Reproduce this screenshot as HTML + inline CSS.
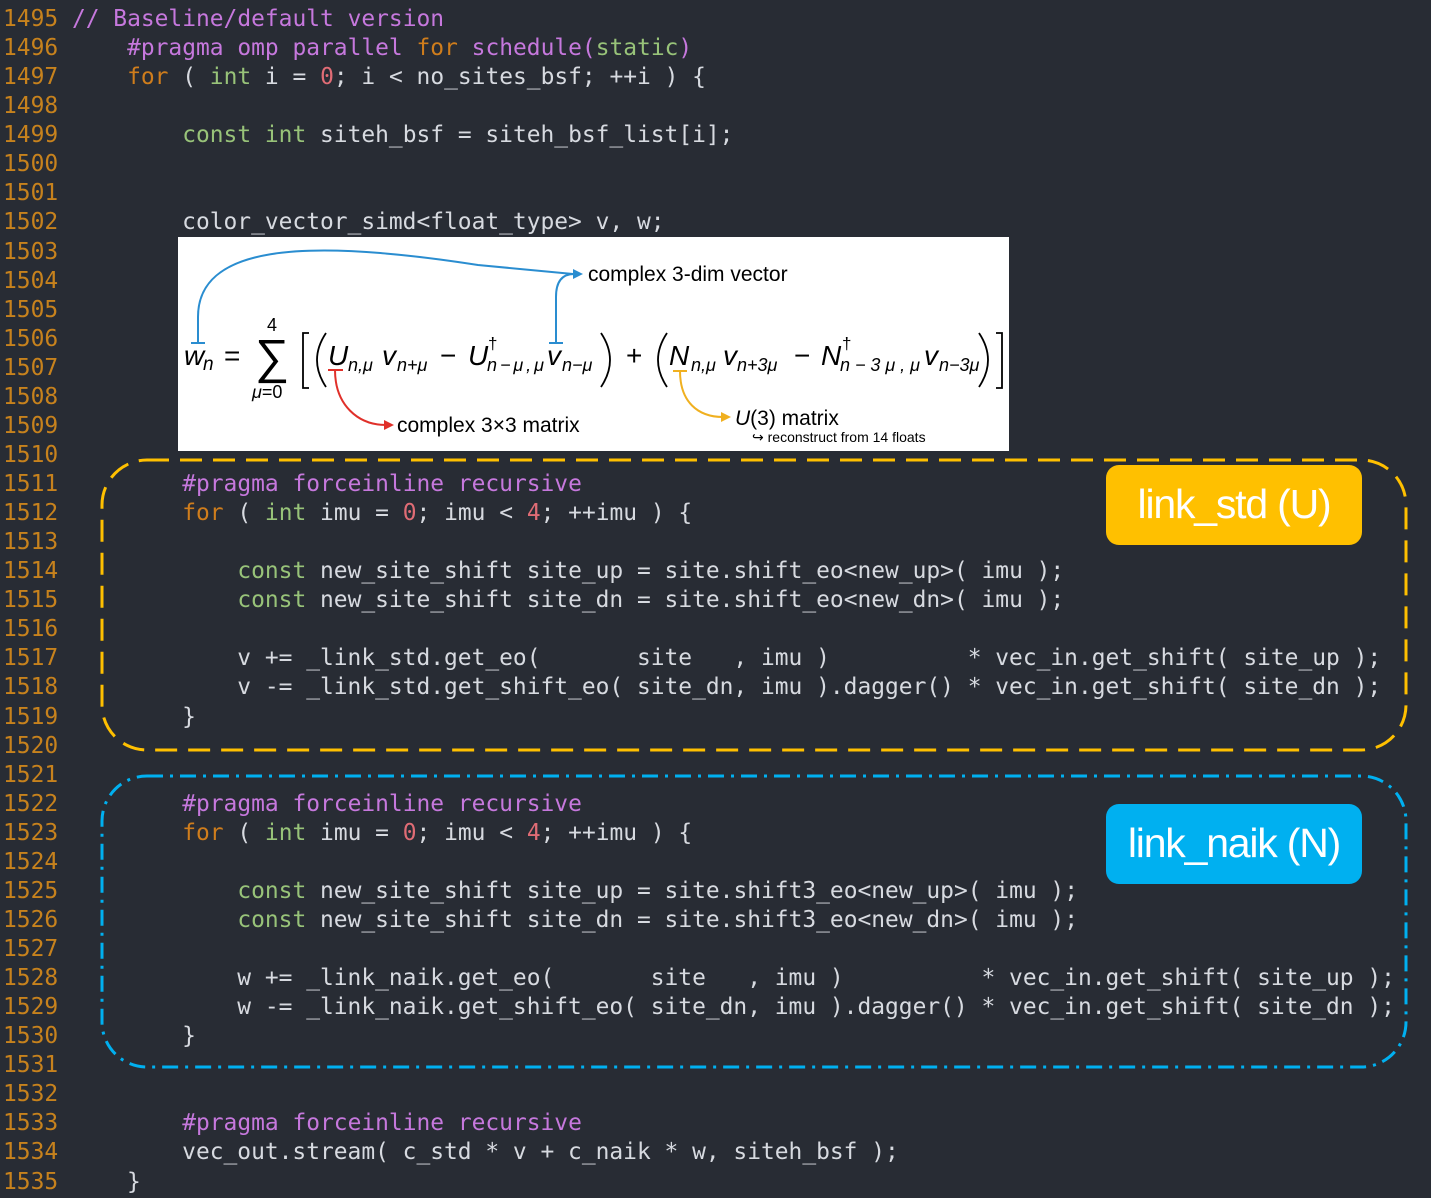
<!DOCTYPE html>
<html><head><meta charset="utf-8"><style>
html,body{margin:0;padding:0;background:#282c34;width:1431px;height:1198px;overflow:hidden;position:relative}
.code{position:absolute;left:3px;top:5px;font-family:"DejaVu Sans Mono","Liberation Mono",monospace;font-size:22.9px;line-height:29.07px;color:#d7dae0;white-space:pre;margin:0}
.n{color:#c7821d}.p{color:#c678dd}.k{color:#cf7d1c}.g{color:#98c379}.r{color:#e06c75}
.lab{position:absolute;left:1106px;width:256px;height:80px;border-radius:13px;color:#fff;font-family:"Liberation Sans",sans-serif;font-size:41px;line-height:78px;text-align:center;letter-spacing:-1.2px}
.math{position:absolute;left:178px;top:237px;width:831px;height:214px;background:#fff}
</style></head><body>
<pre class="code"><span class="n">1495</span> <span class="p">// Baseline/default version</span>
<span class="n">1496</span>     <span class="p">#pragma omp parallel</span> <span class="k">for</span> <span class="p">schedule(</span><span class="g">static</span><span class="p">)</span>
<span class="n">1497</span>     <span class="k">for</span> ( <span class="g">int</span> i = <span class="r">0</span>; i &lt; no_sites_bsf; ++i ) {
<span class="n">1498</span>
<span class="n">1499</span>         <span class="g">const int</span> siteh_bsf = siteh_bsf_list[i];
<span class="n">1500</span>
<span class="n">1501</span>
<span class="n">1502</span>         color_vector_simd&lt;float_type&gt; v, w;
<span class="n">1503</span>
<span class="n">1504</span>
<span class="n">1505</span>
<span class="n">1506</span>
<span class="n">1507</span>
<span class="n">1508</span>
<span class="n">1509</span>
<span class="n">1510</span>
<span class="n">1511</span>         <span class="p">#pragma forceinline recursive</span>
<span class="n">1512</span>         <span class="k">for</span> ( <span class="g">int</span> imu = <span class="r">0</span>; imu &lt; <span class="r">4</span>; ++imu ) {
<span class="n">1513</span>
<span class="n">1514</span>             <span class="g">const</span> new_site_shift site_up = site.shift_eo&lt;new_up&gt;( imu );
<span class="n">1515</span>             <span class="g">const</span> new_site_shift site_dn = site.shift_eo&lt;new_dn&gt;( imu );
<span class="n">1516</span>
<span class="n">1517</span>             v += _link_std.get_eo(       site   , imu )          * vec_in.get_shift( site_up );
<span class="n">1518</span>             v -= _link_std.get_shift_eo( site_dn, imu ).dagger() * vec_in.get_shift( site_dn );
<span class="n">1519</span>         }
<span class="n">1520</span>
<span class="n">1521</span>
<span class="n">1522</span>         <span class="p">#pragma forceinline recursive</span>
<span class="n">1523</span>         <span class="k">for</span> ( <span class="g">int</span> imu = <span class="r">0</span>; imu &lt; <span class="r">4</span>; ++imu ) {
<span class="n">1524</span>
<span class="n">1525</span>             <span class="g">const</span> new_site_shift site_up = site.shift3_eo&lt;new_up&gt;( imu );
<span class="n">1526</span>             <span class="g">const</span> new_site_shift site_dn = site.shift3_eo&lt;new_dn&gt;( imu );
<span class="n">1527</span>
<span class="n">1528</span>             w += _link_naik.get_eo(       site   , imu )          * vec_in.get_shift( site_up );
<span class="n">1529</span>             w -= _link_naik.get_shift_eo( site_dn, imu ).dagger() * vec_in.get_shift( site_dn );
<span class="n">1530</span>         }
<span class="n">1531</span>
<span class="n">1532</span>
<span class="n">1533</span>         <span class="p">#pragma forceinline recursive</span>
<span class="n">1534</span>         vec_out.stream( c_std * v + c_naik * w, siteh_bsf );
<span class="n">1535</span>     }</pre>

<svg style="position:absolute;left:0;top:0" width="1431" height="1198">
<rect x="102" y="460" width="1304" height="290" rx="45" fill="none" stroke="#ffc000" stroke-width="3" stroke-dasharray="22 11"/>
<rect x="102" y="776" width="1304" height="291" rx="45" fill="none" stroke="#00b0f0" stroke-width="3" stroke-dasharray="16 7 3 7"/>
</svg>

<div class="lab" style="top:465px;background:#ffc000">link_std (U)</div>
<div class="lab" style="top:804px;background:#00b0f0">link_naik (N)</div>

<div class="math">
<svg width="831" height="214" style="font-family:'Liberation Sans',sans-serif">
<g fill="none" stroke-width="2">
<path d="M20,106 L20,80 C20,10 120,0 300,28 L395,37" stroke="#2a8dd0"/>
<path d="M13,106 L27,106" stroke="#2a8dd0"/>
<path d="M378,106 L378,60 Q378,37 396,37" stroke="#2a8dd0"/>
<path d="M371,106 L385,106" stroke="#2a8dd0"/>
<path d="M157,133 C157,168 180,188 208,188" stroke="#e0302a"/>
<path d="M150,133 L165,133" stroke="#e0302a"/>
<path d="M502,134 C502,165 520,180 545,180" stroke="#f0b020"/>
<path d="M495,134 L509,134" stroke="#f0b020"/>
</g>
<g fill="none" stroke="#000" stroke-width="1.8">
<path d="M131,96 L125,96 L125,151 L131,151"/>
<path d="M818,96 L824,96 L824,151 L818,151"/>
<path d="M148,96 Q130,123 148,150"/>
<path d="M423,96 Q441,123 423,150"/>
<path d="M489,96 Q471,123 489,150"/>
<path d="M801,96 Q819,123 801,150"/>
</g>
<path d="M395,32 L405,37 L395,42Z" fill="#2a8dd0"/>
<path d="M206,183 L216,188 L206,193Z" fill="#e0302a"/>
<path d="M543,175 L553,180 L543,185Z" fill="#f0b020"/>
<text x="410" y="44" font-size="21">complex 3-dim vector</text>
<text x="219" y="195" font-size="21">complex 3×3 matrix</text>
<text x="557" y="188" font-size="21"><tspan font-style="italic">U</tspan>(3) matrix</text>
<text x="574" y="205" font-size="14">↪ reconstruct from 14 floats</text>
<g font-style="italic" font-size="28">
<text x="6" y="128">w</text><text x="25" y="133" font-size="19">n</text>
<text x="46" y="128" font-style="normal">=</text>
<text x="77" y="136" font-style="normal" font-size="48">∑</text>
<text x="89" y="94" font-style="normal" font-size="18">4</text>
<text x="74" y="161" font-size="18">μ<tspan font-style="normal">=0</tspan></text>
<text x="150" y="128">U</text><text x="170" y="134" font-size="18">n,μ</text>
<text x="204" y="128">v</text><text x="219" y="134" font-size="18">n+μ</text>
<text x="262" y="128" font-style="normal">−</text>
<text x="290" y="128">U</text><text x="310" y="112" font-size="17" font-style="normal">†</text><text x="309" y="134" font-size="18" textLength="57" lengthAdjust="spacing">n−μ,μ</text>
<text x="369" y="128">v</text><text x="384" y="134" font-size="18">n−μ</text>
<text x="448" y="128" font-style="normal">+</text>
<text x="491" y="128">N</text><text x="513" y="134" font-size="18">n,μ</text>
<text x="545" y="128">v</text><text x="559" y="134" font-size="18">n+3μ</text>
<text x="616" y="128" font-style="normal">−</text>
<text x="643" y="128">N</text><text x="664" y="112" font-size="17" font-style="normal">†</text><text x="662" y="134" font-size="18" textLength="80" lengthAdjust="spacing">n−3μ,μ</text>
<text x="746" y="128">v</text><text x="761" y="134" font-size="18">n−3μ</text>
</g>
</svg>
</div>
</body></html>
